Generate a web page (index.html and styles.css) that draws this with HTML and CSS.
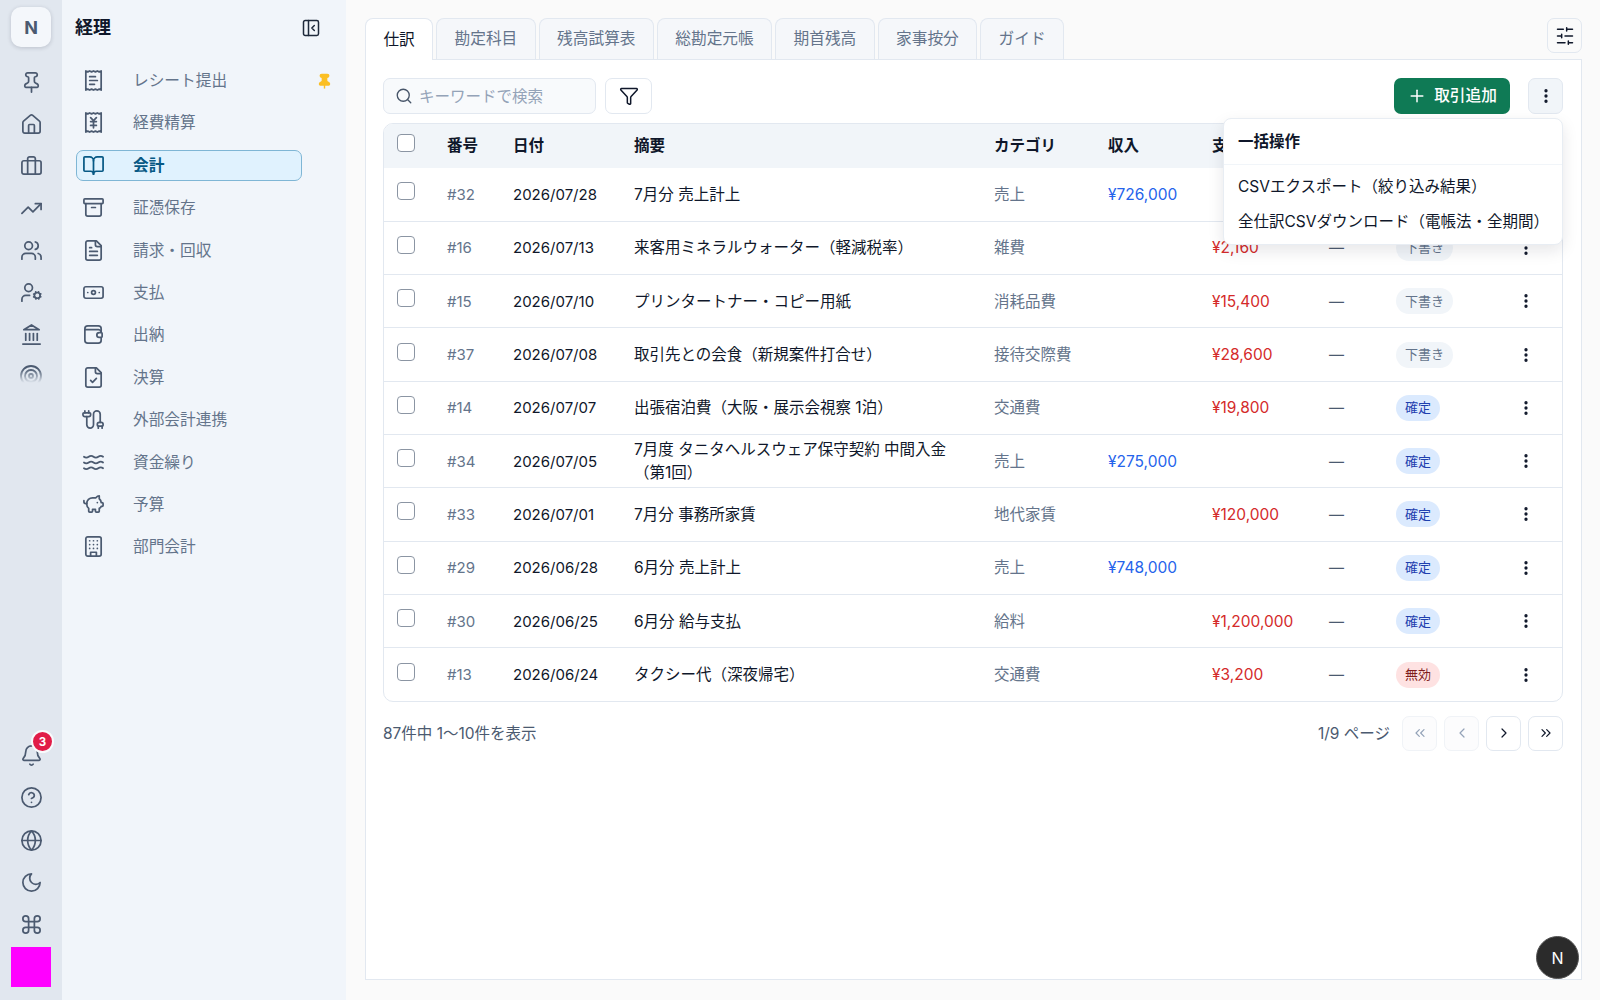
FILE: index.html
```html
<!DOCTYPE html>
<html lang="ja">
<head>
    <meta charset="UTF-8">
    <meta name="viewport" content="width=device-width, initial-scale=1.0">
    <title>経理</title>
    <link rel="stylesheet" href="styles.css">
</head>
<body>
    <svg class="sprite" xmlns="http://www.w3.org/2000/svg">
        <symbol id="i-pin" viewBox="0 0 24 24"><path d="M12 17v5"/><path d="M9 10.76a2 2 0 0 1-1.11 1.79l-1.78.9A2 2 0 0 0 5 15.24V16a1 1 0 0 0 1 1h12a1 1 0 0 0 1-1v-.76a2 2 0 0 0-1.11-1.79l-1.78-.9A2 2 0 0 1 15 10.76V7a1 1 0 0 1 1-1 2 2 0 0 0 0-4H8a2 2 0 0 0 0 4 1 1 0 0 1 1 1z"/></symbol>
        <symbol id="i-house" viewBox="0 0 24 24"><path d="M15 21v-8a1 1 0 0 0-1-1h-4a1 1 0 0 0-1 1v8"/><path d="M3 10a2 2 0 0 1 .709-1.528l7-5.999a2 2 0 0 1 2.582 0l7 5.999A2 2 0 0 1 21 10v9a2 2 0 0 1-2 2H5a2 2 0 0 1-2-2z"/></symbol>
        <symbol id="i-briefcase" viewBox="0 0 24 24"><path d="M16 20V4a2 2 0 0 0-2-2h-4a2 2 0 0 0-2 2v16"/><rect width="20" height="14" x="2" y="6" rx="2"/></symbol>
        <symbol id="i-trending" viewBox="0 0 24 24"><polyline points="22 7 13.5 15.5 8.5 10.5 2 17"/><polyline points="16 7 22 7 22 13"/></symbol>
        <symbol id="i-users" viewBox="0 0 24 24"><path d="M16 21v-2a4 4 0 0 0-4-4H6a4 4 0 0 0-4 4v2"/><circle cx="9" cy="7" r="4"/><path d="M22 21v-2a4 4 0 0 0-3-3.87"/><path d="M16 3.13a4 4 0 0 1 0 7.75"/></symbol>
        <symbol id="i-user-cog" viewBox="0 0 24 24"><circle cx="18" cy="15" r="3"/><circle cx="9" cy="7" r="4"/><path d="M10 15H6a4 4 0 0 0-4 4v2"/><path d="m21.7 16.4-.9-.3"/><path d="m15.2 13.9-.9-.3"/><path d="m16.6 18.7.3-.9"/><path d="m19.1 12.2.3-.9"/><path d="m19.6 18.7-.4-1"/><path d="m16.8 12.3-.4-1"/><path d="m14.3 16.6 1-.4"/><path d="m20.7 13.8 1-.4"/></symbol>
        <symbol id="i-landmark" viewBox="0 0 24 24"><path d="M3 22h18"/><path d="M6 18v-7"/><path d="M10 18v-7"/><path d="M14 18v-7"/><path d="M18 18v-7"/><path d="M12 2l8 5H4z"/></symbol>
        <symbol id="i-rings" viewBox="0 0 24 24"><circle cx="12" cy="12" r="10"/><circle cx="12" cy="12" r="6"/><circle cx="12" cy="12" r="2"/></symbol>
        <symbol id="i-bell" viewBox="0 0 24 24"><path d="M10.268 21a2 2 0 0 0 3.464 0"/><path d="M3.262 15.326A1 1 0 0 0 4 17h16a1 1 0 0 0 .74-1.673C19.41 13.956 18 12.499 18 8A6 6 0 0 0 6 8c0 4.499-1.411 5.956-2.738 7.326"/></symbol>
        <symbol id="i-help" viewBox="0 0 24 24"><circle cx="12" cy="12" r="10"/><path d="M9.09 9a3 3 0 0 1 5.83 1c0 2-3 3-3 3"/><path d="M12 17h.01"/></symbol>
        <symbol id="i-globe" viewBox="0 0 24 24"><circle cx="12" cy="12" r="10"/><path d="M12 2a14.5 14.5 0 0 0 0 20 14.5 14.5 0 0 0 0-20"/><path d="M2 12h20"/></symbol>
        <symbol id="i-moon" viewBox="0 0 24 24"><path d="M12 3a6 6 0 0 0 9 9 9 9 0 1 1-9-9Z"/></symbol>
        <symbol id="i-command" viewBox="0 0 24 24"><path d="M15 6v12a3 3 0 1 0 3-3H6a3 3 0 1 0 3 3V6a3 3 0 1 0-3 3h12a3 3 0 1 0-3-3"/></symbol>
        <symbol id="i-receipt" viewBox="0 0 24 24"><path d="M4 2v20l2-1 2 1 2-1 2 1 2-1 2 1 2-1 2 1V2l-2 1-2-1-2 1-2-1-2 1-2-1-2 1Z"/><path d="M14 8H8"/><path d="M16 12H8"/><path d="M13 16H8"/></symbol>
        <symbol id="i-receipt-yen" viewBox="0 0 24 24"><path d="M4 2v20l2-1 2 1 2-1 2 1 2-1 2 1 2-1 2 1V2l-2 1-2-1-2 1-2-1-2 1-2-1-2 1Z"/><path d="m12 10 3-3"/><path d="m9 7 3 3v7.5"/><path d="M9 11h6"/><path d="M9 15h6"/></symbol>
        <symbol id="i-book" viewBox="0 0 24 24"><path d="M12 7v14"/><path d="M3 18a1 1 0 0 1-1-1V4a1 1 0 0 1 1-1h5a4 4 0 0 1 4 4 4 4 0 0 1 4-4h5a1 1 0 0 1 1 1v13a1 1 0 0 1-1 1h-6a3 3 0 0 0-3 3 3 3 0 0 0-3-3z"/></symbol>
        <symbol id="i-archive" viewBox="0 0 24 24"><rect width="20" height="5" x="2" y="3" rx="1"/><path d="M4 8v11a2 2 0 0 0 2 2h12a2 2 0 0 0 2-2V8"/><path d="M10 12h4"/></symbol>
        <symbol id="i-file" viewBox="0 0 24 24"><path d="M15 2H6a2 2 0 0 0-2 2v16a2 2 0 0 0 2 2h12a2 2 0 0 0 2-2V7Z"/><path d="M14 2v4a2 2 0 0 0 2 2h4"/><path d="M10 9H8"/><path d="M16 13H8"/><path d="M16 17H8"/></symbol>
        <symbol id="i-banknote" viewBox="0 0 24 24"><rect width="20" height="12" x="2" y="6" rx="2"/><circle cx="12" cy="12" r="2"/><path d="M6 12h.01M18 12h.01"/></symbol>
        <symbol id="i-wallet" viewBox="0 0 24 24"><path d="M20 9V6a3 3 0 0 0-3-3H6a3 3 0 0 0-3 3v12a3 3 0 0 0 3 3h11a3 3 0 0 0 3-3v-2"/><path d="M3 7h14a3 3 0 0 1 3 2"/><path d="M20 10h-2a2.5 2.5 0 0 0 0 5h2a1 1 0 0 0 1-1v-3a1 1 0 0 0-1-1z"/></symbol>
        <symbol id="i-file-check" viewBox="0 0 24 24"><path d="M15 2H6a2 2 0 0 0-2 2v16a2 2 0 0 0 2 2h12a2 2 0 0 0 2-2V7Z"/><path d="M14 2v4a2 2 0 0 0 2 2h4"/><path d="m9 15 2 2 4-4"/></symbol>
        <symbol id="i-cable" viewBox="0 0 24 24"><path d="M17 21v-2a1 1 0 0 1-1-1v-1a2 2 0 0 1 2-2h2a2 2 0 0 1 2 2v1a1 1 0 0 1-1 1"/><path d="M19 15V6.5a3.5 3.5 0 0 0-7 0v11a3.5 3.5 0 0 1-7 0V9"/><path d="M21 21v-2h-4"/><path d="M3 5V3"/><path d="M7 5V3"/><path d="M3 9a2 2 0 0 1-2-2V6a1 1 0 0 1 1-1h6a1 1 0 0 1 1 1v1a2 2 0 0 1-2 2z"/></symbol>
        <symbol id="i-waves" viewBox="0 0 24 24"><path d="M2 6c.6.5 1.2 1 2.5 1C7 7 7 5 9.5 5c2.6 0 2.4 2 5 2 2.5 0 2.5-2 5-2 1.3 0 1.9.5 2.5 1"/><path d="M2 12c.6.5 1.2 1 2.5 1 2.5 0 2.5-2 5-2 2.6 0 2.4 2 5 2 2.5 0 2.5-2 5-2 1.3 0 1.9.5 2.5 1"/><path d="M2 18c.6.5 1.2 1 2.5 1 2.5 0 2.5-2 5-2 2.6 0 2.4 2 5 2 2.5 0 2.5-2 5-2 1.3 0 1.9.5 2.5 1"/></symbol>
        <symbol id="i-piggy" viewBox="0 0 24 24"><path d="M11 17h3v2a1 1 0 0 0 1 1h2a1 1 0 0 0 1-1v-3a3.16 3.16 0 0 0 2-2h1a1 1 0 0 0 1-1v-2a1 1 0 0 0-1-1h-1a5 5 0 0 0-2-4V3a4 4 0 0 0-3.2 1.6l-.3.4H11a6 6 0 0 0-6 6v1a5 5 0 0 0 2 4v3a1 1 0 0 0 1 1h2a1 1 0 0 0 1-1z"/><path d="M16 10h.01"/><path d="M2 8v1a2 2 0 0 0 2 2h1"/></symbol>
        <symbol id="i-building" viewBox="0 0 24 24"><rect width="16" height="20" x="4" y="2" rx="2"/><path d="M9 22v-4h6v4"/><path d="M8 6h.01M16 6h.01M12 6h.01M12 10h.01M12 14h.01M16 10h.01M16 14h.01M8 10h.01M8 14h.01"/></symbol>
        <symbol id="i-panel" viewBox="0 0 24 24"><rect width="18" height="18" x="3" y="3" rx="2"/><path d="M9 3v18"/><path d="m16 15-3-3 3-3"/></symbol>
        <symbol id="i-sliders" viewBox="0 0 24 24"><path d="M21 4h-7M10 4H3M21 12h-9M8 12H3M21 20h-5M12 20H3M14 2v4M8 10v4M16 18v4"/></symbol>
        <symbol id="i-funnel" viewBox="0 0 24 24"><path d="M10 20a1 1 0 0 0 .553.895l2 1A1 1 0 0 0 14 21v-7a2 2 0 0 1 .517-1.341L21.74 4.67A1 1 0 0 0 21 3H3a1 1 0 0 0-.742 1.67l7.225 7.989A2 2 0 0 1 10 14z"/></symbol>
        <symbol id="i-search" viewBox="0 0 24 24"><circle cx="11" cy="11" r="8"/><path d="m21 21-4.3-4.3"/></symbol>
        <symbol id="i-plus" viewBox="0 0 24 24"><path d="M5 12h14"/><path d="M12 5v14"/></symbol>
        <symbol id="i-dots" viewBox="0 0 24 24"><circle cx="12" cy="5" r="1"/><circle cx="12" cy="12" r="1"/><circle cx="12" cy="19" r="1"/></symbol>
        <symbol id="i-first" viewBox="0 0 24 24"><path d="m11 17-5-5 5-5"/><path d="m18 17-5-5 5-5"/></symbol>
        <symbol id="i-prev" viewBox="0 0 24 24"><path d="m15 18-6-6 6-6"/></symbol>
        <symbol id="i-next" viewBox="0 0 24 24"><path d="m9 18 6-6-6-6"/></symbol>
        <symbol id="i-last" viewBox="0 0 24 24"><path d="m6 17 5-5-5-5"/><path d="m13 17 5-5-5-5"/></symbol>
    </svg>

    <div class="app">
        <aside class="rail">
            <div class="rail-logo">N</div>
            <div class="rail-item"><svg class="icon"><use href="#i-pin"/></svg></div>
            <div class="rail-item"><svg class="icon"><use href="#i-house"/></svg></div>
            <div class="rail-item"><svg class="icon"><use href="#i-briefcase"/></svg></div>
            <div class="rail-item"><svg class="icon"><use href="#i-trending"/></svg></div>
            <div class="rail-item"><svg class="icon"><use href="#i-users"/></svg></div>
            <div class="rail-item"><svg class="icon"><use href="#i-user-cog"/></svg></div>
            <div class="rail-item"><svg class="icon"><use href="#i-landmark"/></svg></div>
            <div class="rail-item rail-fade"><svg class="icon"><use href="#i-rings"/></svg></div>

            <div class="rail-bottom">
                <div class="rail-item">
                    <svg class="icon"><use href="#i-bell"/></svg>
                    <span class="rail-badge">3</span>
                </div>
                <div class="rail-item"><svg class="icon"><use href="#i-help"/></svg></div>
                <div class="rail-item"><svg class="icon"><use href="#i-globe"/></svg></div>
                <div class="rail-item"><svg class="icon"><use href="#i-moon"/></svg></div>
                <div class="rail-item"><svg class="icon"><use href="#i-command"/></svg></div>
                <div class="rail-avatar"></div>
            </div>
        </aside>

        <nav class="sidebar">
            <div class="sidebar-head">
                <h1 class="sidebar-title">経理</h1>
                <svg class="icon icon-panel"><use href="#i-panel"/></svg>
            </div>
            <ul class="nav-list">
                <li class="nav-item">
                    <svg class="icon"><use href="#i-receipt"/></svg>
                    <span>レシート提出</span>
                    <svg class="nav-pin"><use href="#i-pin"/></svg>
                </li>
                <li class="nav-item"><svg class="icon"><use href="#i-receipt-yen"/></svg><span>経費精算</span></li>
                <li class="nav-item active"><svg class="icon"><use href="#i-book"/></svg><span>会計</span></li>
                <li class="nav-item"><svg class="icon"><use href="#i-archive"/></svg><span>証憑保存</span></li>
                <li class="nav-item"><svg class="icon"><use href="#i-file"/></svg><span>請求・回収</span></li>
                <li class="nav-item"><svg class="icon"><use href="#i-banknote"/></svg><span>支払</span></li>
                <li class="nav-item"><svg class="icon"><use href="#i-wallet"/></svg><span>出納</span></li>
                <li class="nav-item"><svg class="icon"><use href="#i-file-check"/></svg><span>決算</span></li>
                <li class="nav-item"><svg class="icon"><use href="#i-cable"/></svg><span>外部会計連携</span></li>
                <li class="nav-item"><svg class="icon"><use href="#i-waves"/></svg><span>資金繰り</span></li>
                <li class="nav-item"><svg class="icon"><use href="#i-piggy"/></svg><span>予算</span></li>
                <li class="nav-item"><svg class="icon"><use href="#i-building"/></svg><span>部門会計</span></li>
            </ul>
        </nav>

        <main class="main">
            <div class="tabbar">
                <div class="tabs">
                    <div class="tab active">仕訳</div>
                    <div class="tab">勘定科目</div>
                    <div class="tab">残高試算表</div>
                    <div class="tab">総勘定元帳</div>
                    <div class="tab">期首残高</div>
                    <div class="tab">家事按分</div>
                    <div class="tab">ガイド</div>
                </div>
                <button class="btn-icon btn-settings"><svg class="icon icon-sm"><use href="#i-sliders"/></svg></button>
            </div>

            <section class="panel">
                <div class="toolbar">
                    <div class="search">
                        <svg class="icon icon-search"><use href="#i-search"/></svg>
                        <span>キーワードで検索</span>
                    </div>
                    <button class="btn-icon btn-filter"><svg class="icon icon-sm"><use href="#i-funnel"/></svg></button>
                    <button class="btn-add"><svg class="icon icon-sm"><use href="#i-plus"/></svg><span>取引追加</span></button>
                    <button class="btn-icon btn-more"><svg class="icon icon-dots"><use href="#i-dots"/></svg></button>

                    <div class="menu">
                        <div class="menu-title">一括操作</div>
                        <div class="menu-item">CSVエクスポート（絞り込み結果）</div>
                        <div class="menu-item">全仕訳CSVダウンロード（電帳法・全期間）</div>
                    </div>
                </div>

                <div class="table-wrap">
                    <table class="journal">
                        <colgroup>
                            <col class="c-check"><col class="c-no"><col class="c-date"><col class="c-desc"><col class="c-cat">
                            <col class="c-in"><col class="c-out"><col class="c-dash"><col class="c-status"><col class="c-menu">
                        </colgroup>
                        <thead>
                            <tr>
                                <th><input type="checkbox" class="check"></th>
                                <th>番号</th><th>日付</th><th>摘要</th><th>カテゴリ</th><th>収入</th><th>支出</th><th></th><th></th><th></th>
                            </tr>
                        </thead>
                        <tbody>
                            <tr>
                                <td><input type="checkbox" class="check"></td><td class="no">#32</td><td class="date">2026/07/28</td><td>7月分 売上計上</td><td class="cat">売上</td>
                                <td class="income">¥726,000</td><td></td><td class="dash">—</td><td></td><td></td>
                            </tr>
                            <tr>
                                <td><input type="checkbox" class="check"></td><td class="no">#16</td><td class="date">2026/07/13</td><td>来客用ミネラルウォーター（軽減税率）</td><td class="cat">雑費</td>
                                <td></td><td class="expense">¥2,160</td><td class="dash">—</td><td><span class="chip chip-draft">下書き</span></td>
                                <td class="row-menu"><svg class="icon icon-dots"><use href="#i-dots"/></svg></td>
                            </tr>
                            <tr>
                                <td><input type="checkbox" class="check"></td><td class="no">#15</td><td class="date">2026/07/10</td><td>プリンタートナー・コピー用紙</td><td class="cat">消耗品費</td>
                                <td></td><td class="expense">¥15,400</td><td class="dash">—</td><td><span class="chip chip-draft">下書き</span></td>
                                <td class="row-menu"><svg class="icon icon-dots"><use href="#i-dots"/></svg></td>
                            </tr>
                            <tr>
                                <td><input type="checkbox" class="check"></td><td class="no">#37</td><td class="date">2026/07/08</td><td>取引先との会食（新規案件打合せ）</td><td class="cat">接待交際費</td>
                                <td></td><td class="expense">¥28,600</td><td class="dash">—</td><td><span class="chip chip-draft">下書き</span></td>
                                <td class="row-menu"><svg class="icon icon-dots"><use href="#i-dots"/></svg></td>
                            </tr>
                            <tr>
                                <td><input type="checkbox" class="check"></td><td class="no">#14</td><td class="date">2026/07/07</td><td>出張宿泊費（大阪・展示会視察 1泊）</td><td class="cat">交通費</td>
                                <td></td><td class="expense">¥19,800</td><td class="dash">—</td><td><span class="chip chip-ok">確定</span></td>
                                <td class="row-menu"><svg class="icon icon-dots"><use href="#i-dots"/></svg></td>
                            </tr>
                            <tr>
                                <td><input type="checkbox" class="check"></td><td class="no">#34</td><td class="date">2026/07/05</td><td>7月度 タニタヘルスウェア保守契約 中間入金（第1回）</td><td class="cat">売上</td>
                                <td class="income">¥275,000</td><td></td><td class="dash">—</td><td><span class="chip chip-ok">確定</span></td>
                                <td class="row-menu"><svg class="icon icon-dots"><use href="#i-dots"/></svg></td>
                            </tr>
                            <tr>
                                <td><input type="checkbox" class="check"></td><td class="no">#33</td><td class="date">2026/07/01</td><td>7月分 事務所家賃</td><td class="cat">地代家賃</td>
                                <td></td><td class="expense">¥120,000</td><td class="dash">—</td><td><span class="chip chip-ok">確定</span></td>
                                <td class="row-menu"><svg class="icon icon-dots"><use href="#i-dots"/></svg></td>
                            </tr>
                            <tr>
                                <td><input type="checkbox" class="check"></td><td class="no">#29</td><td class="date">2026/06/28</td><td>6月分 売上計上</td><td class="cat">売上</td>
                                <td class="income">¥748,000</td><td></td><td class="dash">—</td><td><span class="chip chip-ok">確定</span></td>
                                <td class="row-menu"><svg class="icon icon-dots"><use href="#i-dots"/></svg></td>
                            </tr>
                            <tr>
                                <td><input type="checkbox" class="check"></td><td class="no">#30</td><td class="date">2026/06/25</td><td>6月分 給与支払</td><td class="cat">給料</td>
                                <td></td><td class="expense">¥1,200,000</td><td class="dash">—</td><td><span class="chip chip-ok">確定</span></td>
                                <td class="row-menu"><svg class="icon icon-dots"><use href="#i-dots"/></svg></td>
                            </tr>
                            <tr>
                                <td><input type="checkbox" class="check"></td><td class="no">#13</td><td class="date">2026/06/24</td><td>タクシー代（深夜帰宅）</td><td class="cat">交通費</td>
                                <td></td><td class="expense">¥3,200</td><td class="dash">—</td><td><span class="chip chip-void">無効</span></td>
                                <td class="row-menu"><svg class="icon icon-dots"><use href="#i-dots"/></svg></td>
                            </tr>
                        </tbody>
                    </table>
                </div>

                <div class="pager">
                    <span class="pager-count">87件中 1〜10件を表示</span>
                    <span class="pager-page">1/9 ページ</span>
                    <button class="btn-icon btn-page" disabled><svg class="icon icon-xs"><use href="#i-first"/></svg></button>
                    <button class="btn-icon btn-page" disabled><svg class="icon icon-xs"><use href="#i-prev"/></svg></button>
                    <button class="btn-icon btn-page"><svg class="icon icon-xs"><use href="#i-next"/></svg></button>
                    <button class="btn-icon btn-page"><svg class="icon icon-xs"><use href="#i-last"/></svg></button>
                </div>
            </section>
        </main>
    </div>

    <div class="dev-badge">N</div>
</body>
</html>
```

FILE: styles.css
```css
:root {
    --ink: #0f172a;
    --muted: #64748b;
    --slate: #4b5a70;
    --line: #e2e8f0;
}

* {
    margin: 0;
    padding: 0;
    box-sizing: border-box;
    font-family: Inter, 'Noto Sans CJK JP', sans-serif;
}

body {
    height: 1000px;
    overflow: hidden;
    background: #fafafa;
    color: var(--ink);
    font-size: 15.5px;
}

.sprite {
    display: none;
}

.icon {
    display: block;
    width: 23px;
    height: 23px;
    fill: none;
    stroke: currentColor;
    stroke-width: 1.8;
    stroke-linecap: round;
    stroke-linejoin: round;
    flex-shrink: 0;
}

.icon-sm {
    width: 20px;
    height: 20px;
}

.icon-xs {
    width: 16px;
    height: 16px;
}

.icon-dots {
    width: 18px;
    height: 18px;
    stroke-width: 2.4;
}

.app {
    display: flex;
    height: 1000px;
}

/* icon rail */
.rail {
    width: 62px;
    flex-shrink: 0;
    height: 1000px;
    display: flex;
    flex-direction: column;
    align-items: center;
    padding-top: 7px;
    background: #e1e7ef;
    color: var(--slate);
}

.rail-logo {
    width: 40px;
    height: 40px;
    margin-bottom: 14px;
    display: flex;
    align-items: center;
    justify-content: center;
    background: #f4f7fb;
    border-radius: 10px;
    box-shadow: 0 1px 4px rgba(15, 23, 42, 0.18);
    font-size: 18px;
    font-weight: 700;
}

.rail-item {
    position: relative;
    height: 42px;
    display: flex;
    align-items: center;
    justify-content: center;
}

.rail-fade .icon {
    width: 24px;
    height: 24px;
    mask-image: linear-gradient(to bottom, black 20%, transparent 78%);
}

.rail-bottom {
    margin-top: auto;
    padding-bottom: 13px;
    display: flex;
    flex-direction: column;
    align-items: center;
}

.rail-bottom .rail-item {
    height: 42.4px;
}

.rail-badge {
    position: absolute;
    top: -4px;
    left: 50%;
    width: 23px;
    height: 23px;
    display: flex;
    align-items: center;
    justify-content: center;
    background: #e11d48;
    border: 2px solid #f8fafc;
    border-radius: 50%;
    color: white;
    font-size: 11.5px;
    font-weight: 700;
}

.rail-avatar {
    width: 40px;
    height: 40px;
    margin-top: 1px;
    background: #ff00ff;
}

/* section menu */
.sidebar {
    width: 284px;
    flex-shrink: 0;
    background: #f1f5fa;
    padding-left: 14px;
}

.sidebar-head {
    height: 54px;
    display: flex;
    align-items: center;
    justify-content: space-between;
    padding-right: 25px;
}

.sidebar-title {
    margin-left: -1px;
    padding-bottom: 3px;
    font-size: 18px;
    font-weight: 700;
}

.icon-panel {
    width: 20px;
    height: 20px;
    margin-top: 1px;
    color: #1e293b;
}

.nav-list {
    list-style: none;
    width: 226px;
    padding-top: 11px;
}

.nav-item {
    position: relative;
    height: 31px;
    margin-bottom: 11.4px;
    display: flex;
    align-items: center;
    gap: 28.5px;
    padding-left: 4.5px;
    border: 1px solid transparent;
    border-radius: 7px;
    color: var(--slate);
    font-size: 15.7px;
}

.nav-item span {
    padding-bottom: 2px;
    color: var(--muted);
}

.nav-item.active {
    background: #e0f2fe;
    border-color: #7fb6d5;
    color: #075985;
}

.nav-item.active span {
    color: #075985;
    font-weight: 700;
}

.nav-pin {
    position: absolute;
    right: -32px;
    top: 7px;
    width: 17px;
    height: 17px;
    fill: #fbbf24;
    stroke: #fbbf24;
    stroke-width: 2;
}

/* main area */
.main {
    flex: 1;
    min-width: 0;
    padding: 18px 18px 20px 19px;
    display: flex;
    flex-direction: column;
}

.tabbar {
    display: flex;
    justify-content: space-between;
    height: 41px;
}

.tabs {
    display: flex;
    gap: 3px;
}

.tab {
    padding: 0 17.4px 3px;
    display: flex;
    align-items: center;
    background: #f5f7fa;
    border: 1px solid var(--line);
    border-bottom: none;
    border-radius: 8px 8px 0 0;
    color: var(--muted);
    font-size: 15.7px;
}

.tab.active {
    background: white;
    color: var(--ink);
    margin-bottom: -1px;
    position: relative;
    z-index: 1;
}

.btn-icon {
    display: flex;
    align-items: center;
    justify-content: center;
    width: 35px;
    height: 35px;
    background: white;
    border: 1px solid var(--line);
    border-radius: 7px;
    color: var(--ink);
}

.btn-settings {
    background: #fafafa;
}

.panel {
    flex: 1;
    background: white;
    border: 1px solid var(--line);
    padding: 18px 18px 0 17px;
}

.toolbar {
    position: relative;
    display: flex;
    align-items: center;
    height: 36px;
    margin-bottom: 9px;
}

.search {
    width: 213px;
    height: 36px;
    display: flex;
    align-items: center;
    gap: 6px;
    padding-left: 11px;
    background: #f8fafc;
    border: 1px solid var(--line);
    border-radius: 7px;
    color: #94a3b8;
}

.search span {
    padding-bottom: 3px;
}

.icon-search {
    width: 18px;
    height: 18px;
    color: #475569;
}

.btn-filter {
    width: 47px;
    height: 36px;
    margin-left: 9px;
}

.btn-add {
    margin-left: auto;
    width: 116px;
    height: 36px;
    display: flex;
    align-items: center;
    justify-content: center;
    gap: 7px;
    background: #0f7a55;
    border: none;
    border-radius: 7px;
    color: white;
    font-size: 15.7px;
    font-weight: 500;
}

.btn-add span {
    padding-bottom: 3px;
}

.btn-more {
    width: 35px;
    height: 36px;
    margin-left: 18px;
    background: #f1f5f9;
}

.menu {
    position: absolute;
    top: 40px;
    right: 0;
    z-index: 5;
    width: 340px;
    height: 127px;
    background: white;
    border: 1px solid #e8edf3;
    border-radius: 8px;
    box-shadow: 0 6px 16px rgba(15, 23, 42, 0.1);
}

.menu-title {
    height: 46px;
    padding: 0 14px 4px;
    display: flex;
    align-items: center;
    border-bottom: 1px solid #f1f5f9;
    font-weight: 700;
}

.menu-item {
    height: 35.5px;
    padding: 0 14px 4px;
    display: flex;
    align-items: center;
    white-space: nowrap;
}

.menu-title + .menu-item {
    margin-top: 4px;
}

/* table */
.table-wrap {
    border: 1px solid var(--line);
    border-radius: 10px;
    overflow: hidden;
}

.journal {
    width: 100%;
    table-layout: fixed;
    border-collapse: collapse;
}

.c-check { width: 63px; }
.c-no { width: 66px; }
.c-date { width: 121px; }
.c-desc { width: 360px; }
.c-cat { width: 114px; }
.c-in { width: 104px; }
.c-out { width: 117px; }
.c-dash { width: 67px; }
.c-status { width: 121px; }

.journal th {
    height: 44px;
    padding-bottom: 4px;
    background: #f1f5f9;
    text-align: left;
    font-weight: 700;
}

.journal td {
    height: 53.3px;
    border-bottom: 1px solid var(--line);
    line-height: 23px;
}

.journal tbody tr:last-child td {
    border-bottom: none;
}

.journal td:nth-child(4) {
    padding-right: 36px;
}

.journal th:first-child,
.journal td:first-child {
    padding-left: 13px;
}

.check {
    appearance: none;
    display: block;
    width: 18px;
    height: 18px;
    margin-bottom: 6px;
    background: white;
    border: 1.5px solid #8b95a3;
    border-radius: 4px;
}

.journal th .check {
    margin-bottom: 3px;
}

.no,
.date {
    font-size: 15px;
}

.no,
.cat {
    color: var(--muted);
}

.income {
    color: #2563eb;
}

.expense {
    color: #d42a2a;
}

.dash {
    color: var(--slate);
    font-size: 15px;
}

.chip {
    display: inline-flex;
    align-items: center;
    height: 26px;
    padding: 0 9px;
    border-radius: 13px;
    font-size: 13px;
}

.chip-draft {
    background: #f1f5f9;
    color: var(--muted);
}

.chip-ok {
    background: #dbeafe;
    color: #1e40af;
}

.chip-void {
    background: #fee2e2;
    color: #7f1d1d;
}

/* pagination */
.pager {
    display: flex;
    align-items: center;
    gap: 7px;
    margin-top: 14px;
}

.pager-count {
    margin-right: auto;
    padding-bottom: 3px;
    color: var(--slate);
}

.pager-page {
    margin-right: 5px;
    padding-bottom: 3px;
    color: var(--slate);
}

.btn-page[disabled] {
    background: #fcfcfd;
    border-color: #f0f3f7;
    color: #94a3b8;
}

.dev-badge {
    position: fixed;
    right: 21px;
    bottom: 21px;
    width: 43px;
    height: 43px;
    display: flex;
    align-items: center;
    justify-content: center;
    background: #2b2b2b;
    border: 1px solid #555;
    border-radius: 50%;
    color: white;
    font-size: 16px;
}
```
